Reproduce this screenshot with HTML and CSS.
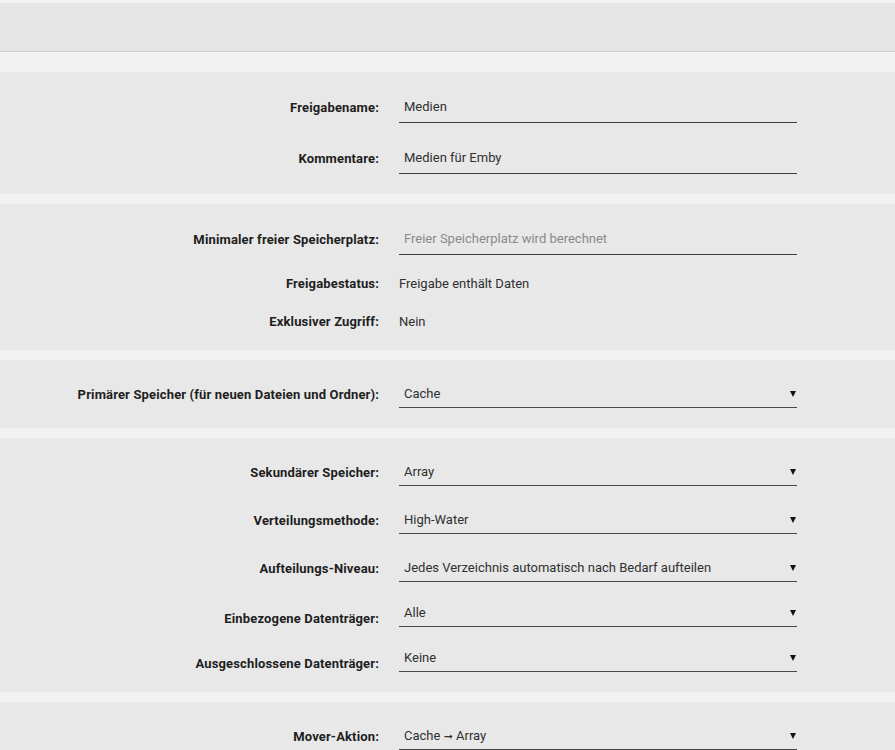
FILE: index.html
```html
<!DOCTYPE html>
<html lang="de">
    <head>
        <meta charset="UTF-8" />
        <meta name="viewport" content="width=device-width, initial-scale=1.0" />
        <title>Freigabe</title>
        <link rel="stylesheet" href="styles.css">
    </head>
    <body>
        <div class="topbar"></div>
        <div class="content">
            <!-- Name / Kommentar -->
            <div class="section">
                <div class="row">
                    <label class="label">Freigabename:</label>
                    <div class="input">Medien</div>
                </div>
                <div class="row">
                    <label class="label">Kommentare:</label>
                    <div class="input">Medien für Emby</div>
                </div>
            </div>

            <!-- Speicherplatz / Status -->
            <div class="section status">
                <div class="row">
                    <label class="label">Minimaler freier Speicherplatz:</label>
                    <div class="input placeholder">Freier Speicherplatz wird berechnet</div>
                </div>
                <div class="row static">
                    <label class="label">Freigabestatus:</label>
                    <div class="value">Freigabe enthält Daten</div>
                </div>
                <div class="row static">
                    <label class="label">Exklusiver Zugriff:</label>
                    <div class="value">Nein</div>
                </div>
            </div>

            <!-- Primärer Speicher -->
            <div class="section">
                <div class="row">
                    <label class="label">Primärer Speicher (für neuen Dateien und Ordner):</label>
                    <div class="select"><span>Cache</span><span class="caret"></span></div>
                </div>
            </div>

            <!-- Sekundärer Speicher -->
            <div class="section">
                <div class="row">
                    <label class="label">Sekundärer Speicher:</label>
                    <div class="select"><span>Array</span><span class="caret"></span></div>
                </div>
                <div class="row">
                    <label class="label">Verteilungsmethode:</label>
                    <div class="select"><span>High-Water</span><span class="caret"></span></div>
                </div>
                <div class="row">
                    <label class="label">Aufteilungs-Niveau:</label>
                    <div class="select"><span>Jedes Verzeichnis automatisch nach Bedarf aufteilen</span><span class="caret"></span></div>
                </div>
                <div class="row multi">
                    <label class="label">Einbezogene Datenträger:</label>
                    <div class="select"><span>Alle</span><span class="caret"></span></div>
                </div>
                <div class="row multi">
                    <label class="label">Ausgeschlossene Datenträger:</label>
                    <div class="select"><span>Keine</span><span class="caret"></span></div>
                </div>
            </div>

            <!-- Mover -->
            <div class="section">
                <div class="row">
                    <label class="label">Mover-Aktion:</label>
                    <div class="select"><span>Cache <span class="arrow">➞</span> Array</span><span class="caret"></span></div>
                </div>
            </div>
        </div>
    </body>
</html>
```
FILE: styles.css
```css
* {
    padding: 0;
    margin: 0;
    box-sizing: border-box;
}
body {
    font-family: Roboto, "Liberation Sans", sans-serif;
    font-size: 13px;
    color: #303030;
    background-color: #f2f2f2;
}
.topbar {
    margin-top: 3px;
    height: 49px;
    background-color: #e6e6e6;
    border-bottom: 1px solid #d0d0d0;
}
.content {
    padding-top: 20px;
}
.section {
    display: flex;
    flex-direction: column;
    gap: 20px;
    padding: 20px 0;
    margin-bottom: 10px;
    background-color: #e8e8e8;
}
.section.status {
    padding-bottom: 19px;
}
.row {
    display: grid;
    grid-template-columns: 379px 398px;
    column-gap: 20px;
    align-items: center;
}
.label {
    text-align: right;
    font-weight: 700;
    letter-spacing: 0.15px;
    color: #1e1e1e;
    white-space: nowrap;
}
.input {
    height: 31px;
    line-height: 30px;
    padding-left: 5px;
    border-bottom: 1px solid #3c3c3c;
}
.placeholder {
    color: #8a8a8a;
}
.static {
    height: 18px;
    line-height: 18px;
}
.select {
    display: flex;
    justify-content: space-between;
    align-items: center;
    height: 28px;
    padding: 0 1px 0 5px;
    border-bottom: 1px solid #484848;
}
.arrow {
    font-family: "DejaVu Sans", sans-serif;
    font-size: 11px;
}
.caret {
    width: 0;
    height: 0;
    border-left: 3px solid transparent;
    border-right: 3px solid transparent;
    border-top: 6px solid #111;
}
.multi .label {
    align-self: end;
    line-height: 16px;
}
.multi .select {
    height: 25px;
    align-items: flex-start;
    line-height: 21px;
}
.multi .caret {
    margin-top: 8px;
}
```
